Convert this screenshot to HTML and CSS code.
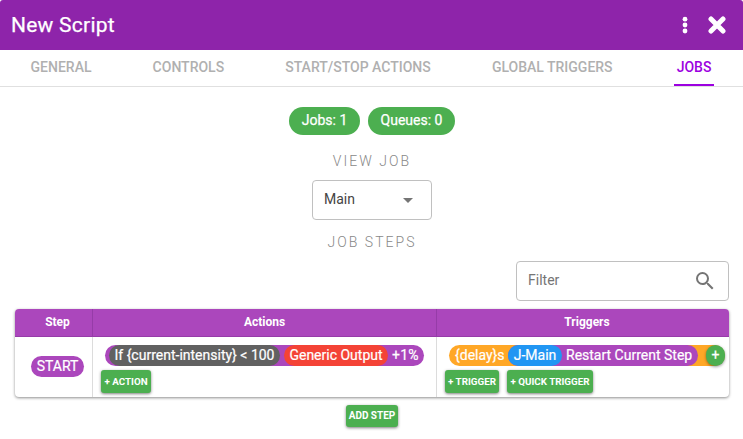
FILE: index.html
```html
<!DOCTYPE html>
<html lang="en">
<head>
<meta charset="utf-8">
<title>New Script</title>
<link rel="stylesheet" href="styles.css">
</head>
<body>
<header class="titlebar">
  <h1>New Script</h1>
  <svg class="dots" width="6" height="18" viewBox="0 0 6 18" fill="#fff"><circle cx="3" cy="3.2" r="2.4"/><circle cx="3" cy="9" r="2.4"/><circle cx="3" cy="15" r="2.4"/></svg>
  <svg class="close" width="18" height="18" viewBox="0 0 18 18" fill="none" stroke="#fff" stroke-width="5" stroke-linecap="round"><path d="M3 3l12 12M15 3L3 15"/></svg>
</header>
<nav class="tabs">
  <a>GENERAL</a><a>CONTROLS</a><a>START/STOP ACTIONS</a><a>GLOBAL TRIGGERS</a><a class="active">JOBS</a>
</nav>
<main>
  <div class="chips"><span class="chip jobs">Jobs: 1</span><span class="chip queues">Queues: 0</span></div>
  <h2>VIEW JOB</h2>
  <div class="field select"><span>Main</span><svg width="10" height="5" viewBox="0 0 10 5" fill="#757575"><path d="M0 0h10L5 5z"/></svg></div>
  <h2 class="steps-title">JOB STEPS</h2>
  <div class="field filter"><span>Filter</span><svg width="24" height="24" viewBox="0 0 24 24" fill="#757575"><path d="M15.5 14h-.79l-.28-.27A6.47 6.47 0 0 0 16 9.5 6.5 6.5 0 1 0 9.5 16c1.61 0 3.09-.59 4.23-1.57l.27.28v.79l5 4.99L20.49 19l-4.99-5zm-6 0a4.5 4.5 0 1 1 0-9 4.5 4.5 0 0 1 0 9z"/></svg></div>
  <section class="table">
    <div class="th step-th">Step</div><div class="th">Actions</div><div class="th triggers-th">Triggers</div>
    <div class="td step"><span class="pill start">START</span></div>
    <div class="td">
      <div class="pill action"><span class="pill condition">If {current-intensity} &lt; 100</span><span class="pill output">Generic Output</span><span>+1%</span></div>
      <div class="buttons"><button class="add-action">+ ACTION</button></div>
    </div>
    <div class="td">
      <div class="pill trigger"><span class="delay">{delay}s</span><span class="pill restart"><span class="pill job">J-Main</span><span class="label">Restart Current Step</span></span><span class="plus">+</span></div>
      <div class="buttons"><button class="add-trigger">+ TRIGGER</button><button class="add-quick">+ QUICK TRIGGER</button></div>
    </div>
  </section>
  <button class="add-step">ADD STEP</button>
</main>
</body>
</html>
```
FILE: styles.css
```css
* { box-sizing: border-box; }
body { margin: 0; height: 439px; overflow: hidden; background: #fff; color: #444; font: 14px/20px Roboto, sans-serif; }
svg { display: block; flex: none; }
.titlebar { display: flex; align-items: center; height: 50px; padding: 0 17px 0 11px; background: #8e24aa; color: #fff; border-radius: 3px 3px 0 0; }
h1 { flex: 1; margin: 0; font-size: 21px; line-height: 30px; font-weight: 400; letter-spacing: .25px; -webkit-text-stroke: .25px #fff; }
.dots { margin-right: 20px; }
.tabs { display: flex; justify-content: space-around; height: 37px; padding-right: 1px; border-bottom: 1px solid #e0e0e0; }
.tabs a { height: 36px; padding: 7px 3px 0; font-weight: 500; color: #b0b0b0; white-space: nowrap; }
.tabs .active { margin-left: 3px; color: #9c00e0; border-bottom: 2px solid #9c00e0; }
main { display: flex; flex-direction: column; align-items: center; padding: 20px 14px 0 15px; }
.chips { display: flex; gap: 8px; }
.chip { height: 28px; border-radius: 14px; background: #4caf50; color: #fff; text-align: center; font-weight: 400; -webkit-text-stroke: .25px #fff; line-height: 27px; }
.jobs { width: 71px; }
.queues { width: 87px; }
h2 { margin: 16px 0 9px; font-size: 14px; line-height: 20px; font-weight: 300; letter-spacing: 2.05px; color: #888; }
h2.steps-title { margin: 12px 0 9px; }
.field { display: flex; align-items: center; justify-content: space-between; height: 40px; border: 1px solid #c0c0c0; border-radius: 4px; padding: 0 18px 2px 11px; }
.select { width: 120px; }
.select svg { margin-top: 3px; }
.filter { width: 213px; align-self: flex-end; padding-right: 11px; color: #757575; }
.filter svg { margin-top: 1px; }
.table { display: grid; grid-template-columns: 78px 344px 292px; grid-template-rows: 28px 60px; width: 714px; margin-top: 8px; border-radius: 4px; overflow: hidden; box-shadow: 0 1px 3px rgba(0,0,0,.45); }
.th { background: #ab47bc; border-right: 1px solid #963ca8; border-bottom: 1px solid #963ca8; color: #fff; font-size: 12px; line-height: 26px; font-weight: 700; text-align: center; }
.step-th { padding-left: 8px; }
.triggers-th { padding-left: 8px; }
.td { padding: 8px 4px 0 8px; border-right: 1px solid #dcdcdc; }
.th:nth-child(3n), .td:nth-child(3n) { border-right: 0; }
.step { padding: 19px 0 0 16px; }
.pill { display: flex; align-items: center; height: 21px; border-radius: 11px; color: #fff; line-height: 21px; font-weight: 400; -webkit-text-stroke: .2px #fff; white-space: nowrap; }
.start { width: 53px; justify-content: center; background: #ab47bc; }
.action { width: 319px; margin-left: 4px; padding-left: 4px; gap: 4px; background: #ab47bc; }
.action > span:last-child { letter-spacing: .2px; }
.condition { width: 171px; justify-content: center; background: #616161; }
.output { width: 104px; justify-content: center; background: #f44336; }
.trigger { width: 276px; margin-left: 4px; background: #ffa726; }
.delay { width: 59px; padding-left: 6px; }
.restart { width: 190px; background: #ab47bc; }
.job { width: 54px; justify-content: center; background: #2196f3; }
.label { margin-left: 4px; }
.plus { width: 19px; height: 21px; margin-left: 8px; border-radius: 10px; background: #4caf50; text-align: center; line-height: 20px; box-shadow: 0 1px 3px rgba(0,0,0,.4); }
.buttons { display: flex; gap: 8px; margin-top: 4px; }
button { height: 23px; padding: 0; border: 0; border-radius: 3px; background: #4caf50; color: #fff; font: 700 9.8px/23px Roboto, sans-serif; white-space: nowrap; box-shadow: 0 1px 3px rgba(0,0,0,.5); }
.add-action { width: 50px; }
.add-trigger { width: 54px; }
.add-quick { width: 86px; }
.add-step { width: 52px; height: 22px; margin-top: 8px; line-height: 22px; font-size: 10px; }
```
